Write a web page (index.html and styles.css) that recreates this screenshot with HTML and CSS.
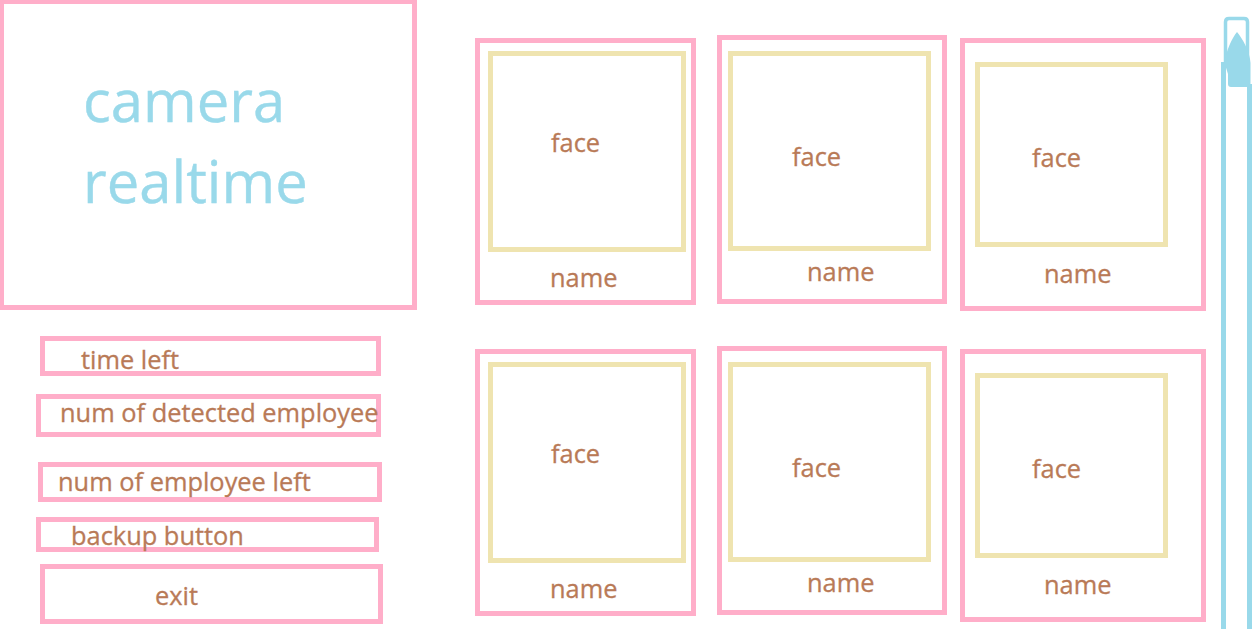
FILE: index.html
```html
<!DOCTYPE html>
<html lang="en">
<head>
<meta charset="utf-8">
<title>Attendance camera mockup</title>
<link rel="stylesheet" href="styles.css">
</head>
<body>
<div class="page">
  <aside class="left">
    <div class="camera">
      <div class="camera-text">camera<br>realtime</div>
    </div>
    <div class="btn btn-time">time left</div>
    <div class="btn btn-detected">num of detected employee</div>
    <div class="btn btn-left">num of employee left</div>
    <div class="btn btn-backup">backup button</div>
    <div class="btn btn-exit">exit</div>
  </aside>

  <main class="grid">
    <div class="card col-a"><div class="face">face</div><div class="name">name</div></div>
    <div class="card col-b"><div class="face">face</div><div class="name">name</div></div>
    <div class="card col-c"><div class="face">face</div><div class="name">name</div></div>
    <div class="card col-a"><div class="face">face</div><div class="name">name</div></div>
    <div class="card col-b"><div class="face">face</div><div class="name">name</div></div>
    <div class="card col-c"><div class="face">face</div><div class="name">name</div></div>
  </main>

  <div class="scroll">
    <svg class="scroll-svg" width="31" height="629" viewBox="0 0 31 629" aria-hidden="true">
      <rect x="0" y="62" width="5" height="567" fill="#99D9EA"/>
      <rect x="26" y="84" width="5" height="545" fill="#99D9EA"/>
      <path d="M4.5 68 V22 Q4.5 18.5 8 18.5 H23 Q26.5 18.5 26.5 22 V86" fill="none" stroke="#99D9EA" stroke-width="3.5"/>
      <path d="M16 32 C21 38 29 51 29.5 63 V83 Q29.5 87 26.5 87 H10 Q7 87 7 84 V74 L3.5 63 C5 51 11 38 16 32 Z" fill="#99D9EA"/>
    </svg>
  </div>
</div>
</body>
</html>
```

FILE: styles.css
```css
html, body {
  margin: 0;
  padding: 0;
  background: #ffffff;
}

body {
  font-family: "Open Sans", "Noto Sans", sans-serif;
  color: #B97A57;
}

.page {
  display: flex;
  width: 1252px;
  height: 629px;
  overflow: hidden;
}

/* ---------- left column ---------- */
.left {
  flex: none;
  width: 475px;
  display: flex;
  flex-direction: column;
  align-items: flex-start;
}

.camera {
  box-sizing: border-box;
  width: 417px;
  height: 310px;
  border-style: solid;
  border-color: #FFAEC9;
  border-width: 4px 5px 5px 4px;
  padding: 55px 0 0 79px;
}

.camera-text {
  font-size: 58px;
  line-height: 81px;
  color: #99D9EA;
  -webkit-text-stroke: 0.4px #99D9EA;
}

.btn {
  box-sizing: border-box;
  border: 5px solid #FFAEC9;
  font-size: 25.4px;
  line-height: 25px;
  white-space: nowrap;
  -webkit-text-stroke: 0.3px #B97A57;
}

.btn-time     { margin: 26px 0 0 40px; width: 341px; height: 40px; padding: 6px 0 0 36px; }
.btn-detected { margin: 18px 0 0 36px; width: 345px; height: 43px; padding: 1px 0 0 19px; }
.btn-left     { margin: 25px 0 0 38px; width: 344px; height: 40px; padding: 2px 0 0 15px; }
.btn-backup   { margin: 15px 0 0 36px; width: 343px; height: 35px; padding: 1px 0 0 30px; }
.btn-exit     { margin: 12px 0 0 40px; width: 343px; height: 60px; padding: 14px 0 0 110px; }

/* ---------- card grid ---------- */
.grid {
  flex: none;
  display: grid;
  grid-template-columns: 242px 243px 246px;
  grid-template-rows: 311px 318px;
  align-items: start;
}

.card {
  box-sizing: border-box;
  border: 5px solid #FFAEC9;
  font-size: 25.4px;
  line-height: 25px;
  -webkit-text-stroke: 0.3px #B97A57;
}

.face {
  box-sizing: border-box;
  border: 5px solid #EFE4B0;
}

.col-a { margin-top: 38px; width: 221px; height: 267px; }
.col-a .face { margin: 8px 0 0 8px; width: 198px; height: 201px; padding: 74px 0 0 58px; }
.col-a .name { margin-top: 13px; padding-left: 70px; }

.col-b { margin-top: 35px; width: 230px; height: 269px; }
.col-b .face { margin: 11px 0 0 6px; width: 203px; height: 200px; padding: 88px 0 0 59px; }
.col-b .name { margin-top: 8px; padding-left: 85px; }

.col-c { margin-top: 38px; width: 246px; height: 273px; }
.col-c .face { margin: 19px 0 0 10px; width: 193px; height: 185px; padding: 78px 0 0 52px; }
.col-c .name { margin-top: 14px; padding-left: 79px; }

/* ---------- scrollbar ---------- */
.scroll {
  flex: none;
  width: 46px;
  padding-left: 15px;
  box-sizing: border-box;
}

.scroll-svg {
  display: block;
}
```
